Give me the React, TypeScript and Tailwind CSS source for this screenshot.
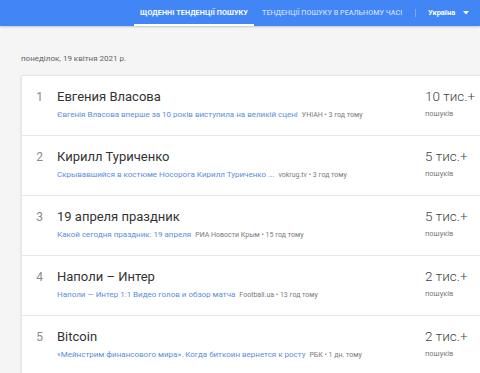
import React from "react";

const rows = [
  {
    n: 1,
    title: "Евгения Власова",
    sub: "Євгенія Власова вперше за 10 років виступила на великій сцені",
    src: "УНІАН • 3 год тому",
    count: "10 тис.+",
  },
  {
    n: 2,
    title: "Кирилл Туриченко",
    sub: "Скрывавшийся в костюме Носорога Кирилл Туриченко ...",
    src: "vokrug.tv • 3 год тому",
    count: "5 тис.+",
  },
  {
    n: 3,
    title: "19 апреля праздник",
    sub: "Какой сегодня праздник: 19 апреля",
    src: "РИА Новости Крым • 15 год тому",
    count: "5 тис.+",
  },
  {
    n: 4,
    title: "Наполи – Интер",
    sub: "Наполи — Интер 1:1 Видео голов и обзор матча",
    src: "Football.ua • 13 год тому",
    count: "2 тис.+",
  },
  {
    n: 5,
    title: "Bitcoin",
    sub: "«Мейнстрим финансового мира». Когда биткоин вернется к росту",
    src: "РБК • 1 дн. тому",
    count: "2 тис.+",
  },
];

export default function App() {
  return (
    <div
      className="w-[480px] h-[373px] overflow-hidden bg-[#f5f5f5] flex flex-col"
      style={{ fontFamily: "Roboto, 'Noto Sans', sans-serif" }}
    >
      <header className="h-[26px] shrink-0 bg-[#4285f4] flex items-stretch shadow-[0_1px_2px_rgba(0,0,0,0.2)]">
        <div className="w-[134px]" />
        <div className="w-[120px] flex items-center justify-center relative text-white font-bold text-[7.2px] tracking-[0.1px]">
          ЩОДЕННІ ТЕНДЕНЦІЇ ПОШУКУ
          <div className="absolute left-0 right-0 bottom-0 h-[2px] bg-white" />
        </div>
        <div className="w-[161px] flex items-center pl-[8px] text-white/70 font-medium text-[7.2px]">
          ТЕНДЕНЦІЇ ПОШУКУ В РЕАЛЬНОМУ ЧАСІ
        </div>
        <div className="flex items-center">
          <div className="w-px h-[8px] bg-white/30" />
        </div>
        <div className="flex items-center pl-[12px] gap-[8px] text-white font-bold text-[7.5px]">
          <span>Україна</span>
          <svg width="6" height="4" viewBox="0 0 6 4">
            <path d="M0 0 L6 0 L3 3.5 Z" fill="white" />
          </svg>
        </div>
      </header>

      <div className="pl-[21px] pt-[28px] text-[8px] text-[#5f6368] leading-[10px]">
        понеділок, 19 квітня 2021 р.
      </div>

      <div className="ml-[21px] mt-[11px] w-[480px] bg-white border-l border-t border-[#e6e6e6] shadow-[0_1px_2px_rgba(0,0,0,0.12)]">
        {rows.map((r) => (
          <div key={r.n} className="h-[60px] flex border-b border-[#e8e8e8]">
            <div className="w-[35px] pt-[14px] text-center text-[12px] leading-[14px] text-[#8a8a8a]">
              {r.n}
            </div>
            <div className="w-[368px] pt-[13px]">
              <div className="text-[13px] leading-[16px] text-[#333]">{r.title}</div>
              <div className="mt-[5px] flex items-center gap-[4px] whitespace-nowrap leading-[10px]">
                <span className="text-[8px] text-[#5a8ede]">{r.sub}</span>
                <span className="text-[7px] text-[#7a7a7a]">{r.src}</span>
              </div>
            </div>
            <div className="pt-[12px]">
              <div className="text-[13.5px] leading-[17px] text-[#444] font-light">{r.count}</div>
              <div className="mt-[4px] text-[7.5px] leading-[9px] text-[#7a7a7a]">пошуків</div>
            </div>
          </div>
        ))}
      </div>
    </div>
  );
}
